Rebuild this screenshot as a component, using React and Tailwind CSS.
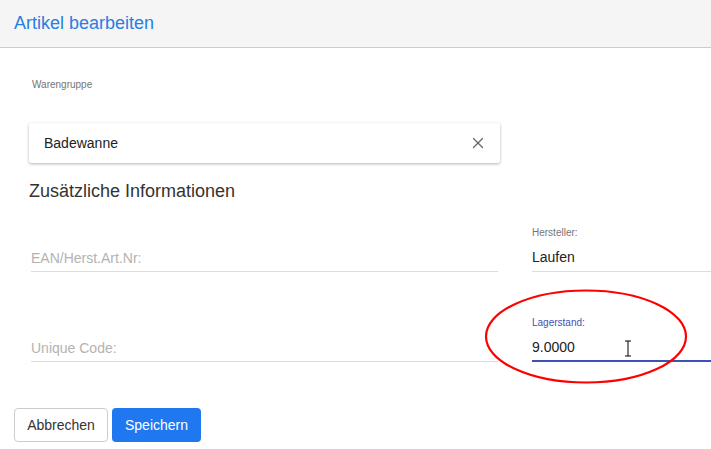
import { X } from "lucide-react";

function Field({ label, value, placeholder, focused }) {
  return (
    <div className="flex flex-col">
      <span
        className={`h-[14px] text-[10px] leading-[14px] ${
          focused ? "text-[#3f51b5]" : "text-[#757575]"
        }`}
      >
        {label}
      </span>
      <div
        className={`mt-[6px] flex h-[26px] items-start ${
          focused ? "border-b-2 border-[#3f51b5]" : "border-b border-[#dddddd]"
        }`}
      >
        {value ? (
          <span className="pt-[3px] text-[14px] leading-[17px] text-[#222]">{value}</span>
        ) : (
          <span className="pt-[4px] text-[14px] leading-[17px] text-[#b3b3b3]">{placeholder}</span>
        )}
      </div>
    </div>
  );
}

export default function App() {
  return (
    <div className="relative h-[449px] w-[711px] overflow-hidden bg-white font-['Liberation_Sans',Arial,sans-serif]">
      <header className="flex h-[48px] items-center border-b border-[#cccccc] bg-[#f5f5f5] px-[14px]">
        <h1 className="text-[18px] text-[#2a7de1]">Artikel bearbeiten</h1>
      </header>

      <main className="pl-[29px]">
        <p className="mt-[31px] pl-[3px] text-[10px] leading-[12px] text-[#757575]">Warengruppe</p>

        <div className="mt-[32px] flex h-[40px] w-[471px] items-center justify-between rounded-[2px] bg-white pl-[15px] pr-[13px] shadow-[0_1px_3px_rgba(0,0,0,0.3)]">
          <span className="text-[14px] text-[#222]">Badewanne</span>
          <X size={18} strokeWidth={1.6} className="text-[#666]" />
        </div>

        <h2 className="mt-[18px] text-[18px] leading-[20px] text-[#333]">Zusätzliche Informationen</h2>

        <div className="mt-[25px] grid grid-cols-[467px_179px] gap-x-[34px] gap-y-[44px] pl-[2px]">
          <Field label="" placeholder="EAN/Herst.Art.Nr:" />
          <Field label="Hersteller:" value="Laufen" />
          <Field label="" placeholder="Unique Code:" />
          <Field label="Lagerstand:" value="9.0000" focused />
        </div>

        <div className="-ml-[15px] mt-[46px] flex gap-[4px]">
          <button className="h-[34px] w-[94px] rounded-[4px] border border-[#cccccc] bg-white text-[14px] text-[#333]">
            Abbrechen
          </button>
          <button className="h-[34px] w-[89px] rounded-[4px] bg-[#1f78f0] text-[14px] text-white">
            Speichern
          </button>
        </div>
      </main>

      {/* annotation overlay */}
      <svg className="pointer-events-none absolute left-0 top-0" width="711" height="449">
        <ellipse cx="586" cy="336.5" rx="100" ry="46" fill="none" stroke="#ff0000" strokeWidth="2.2" />
        <path d="M625 341h6M628 341v15M625 356h6" stroke="#000" strokeWidth="1" fill="none" />
      </svg>
    </div>
  );
}
